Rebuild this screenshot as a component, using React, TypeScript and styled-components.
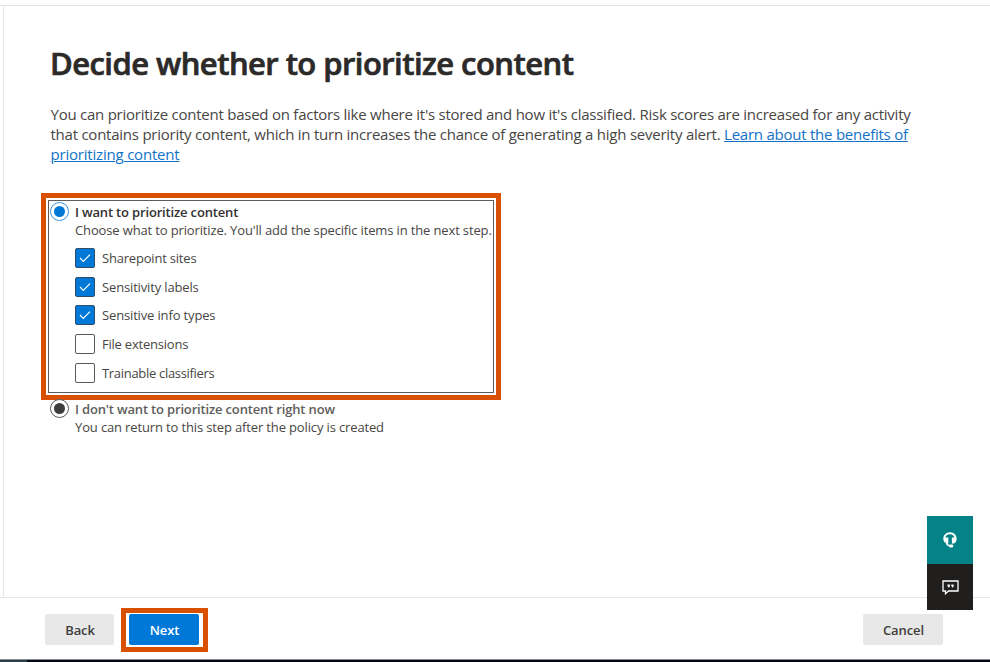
import React from "react";
import styled, { createGlobalStyle } from "styled-components";

const GlobalStyle = createGlobalStyle`
  * { box-sizing: border-box; }
  body {
    margin: 0;
    background: #fff;
    color: #323130;
    font-family: "Open Sans", "Noto Sans", sans-serif;
  }
`;

const Page = styled.div`
  position: relative;
  display: flex;
  flex-direction: column;
  width: 990px;
  height: 662px;
  padding-top: 5px;
  overflow: hidden;
`;

const Main = styled.main`
  flex: 1;
  border-top: 1px solid #e3e3e3;
  padding-left: 3px;
`;

const Panel = styled.section`
  height: 100%;
  border-left: 1px solid #e6e6e6;
  padding: 37px 0 0 37px;
`;

const Title = styled.h1`
  margin: 0 0 0 9px;
  font-size: 31px;
  font-weight: 600;
  line-height: 40px;
  letter-spacing: -0.55px;
  white-space: nowrap;
  color: #2b2a29;
  -webkit-text-stroke: 0.7px #2b2a29;
`;

const Intro = styled.p`
  margin: 21px 0 0 9.500px;
  font-size: 15px;
  line-height: 20px;
  color: #484644;
`;

const IntroLine = styled.span<{ $spacing: number }>`
  display: block;
  white-space: nowrap;
  letter-spacing: ${(p) => p.$spacing}px;
`;

const Link = styled.a`
  color: #1272c7;
  text-decoration: underline;
  text-decoration-thickness: 1px;
  text-underline-offset: 1px;
`;

const Highlight = styled.div`
  border: 5px solid #d85000;
`;

const OptionHighlight = styled(Highlight)`
  width: 460px;
  height: 207px;
  margin-top: 29px;
  padding: 2px;
`;

const FocusFrame = styled.div`
  height: 193px;
  padding-top: 1px;
  border: 1px solid #5c5c5c;
`;

const Option = styled.div<{ $outside?: boolean }>`
  display: flex;
  gap: 6px;
  margin-top: ${(p) => (p.$outside ? "-1px" : "0")};
  padding-left: ${(p) => (p.$outside ? "9px" : "1px")};
`;

const Radio = styled.span<{ $color: string; $ring: string }>`
  display: grid;
  place-items: center;
  flex: none;
  width: 19px;
  height: 19px;
  border: 1px solid ${(p) => p.$ring};
  border-radius: 50%;
  background: #fff;

  &::after {
    content: "";
    width: 11px;
    height: 11px;
    border-radius: 50%;
    background: ${(p) => p.$color};
  }
`;

const OptionText = styled.div`
  padding-top: 1px;
  font-size: 13px;
  line-height: 18px;
  white-space: nowrap;
`;

const OptionTitle = styled.div<{ $muted?: boolean }>`
  font-weight: 600;
  letter-spacing: -0.165px;
  color: ${(p) => (p.$muted ? "#605e5c" : "#323130")};
`;

const OptionNote = styled.div`
  letter-spacing: -0.14px;
  color: #484644;
`;

const CheckList = styled.div`
  display: grid;
  gap: 8.700px;
  margin-top: 9px;
`;

const CheckRow = styled.div<{ $spacing: number }>`
  display: flex;
  align-items: center;
  gap: 7px;
  height: 20px;
  color: #484644;
  line-height: 20px;
  letter-spacing: ${(p) => p.$spacing}px;
`;

const Box = styled.span<{ $checked: boolean }>`
  display: grid;
  place-items: center;
  width: 20px;
  height: 20px;
  border: 1px solid ${(p) => (p.$checked ? "#2d4d6b" : "#5c5a58")};
  border-radius: 2px;
  background: ${(p) => (p.$checked ? "#0078d7" : "#fff")};
`;

const Footer = styled.footer`
  display: flex;
  align-items: center;
  height: 62px;
  padding: 2px 47px 0 45px;
  border-top: 1px solid #e6e6e6;
`;

const Button = styled.button<{ $primary?: boolean; $wide?: boolean }>`
  width: ${(p) => (p.$wide ? 80 : p.$primary ? 70 : 69)}px;
  height: 31px;
  padding: 1px 0 0 1px;
  border: 0;
  border-radius: 2px;
  background: ${(p) => (p.$primary ? "#0078d7" : "#e8e8e8")};
  color: ${(p) => (p.$primary ? "#fff" : "#3f3e3c")};
  font: 600 13px/28px "Open Sans", "Noto Sans", sans-serif;
  letter-spacing: -0.1px;
`;

const NextHighlight = styled(Highlight)`
  display: flex;
  align-items: center;
  width: 87px;
  height: 44px;
  margin: 0 auto 0 7px;
  padding-left: 3px;
`;

const Taskbar = styled.div`
  height: 3px;
  border-top: 1px solid #8a8d92;
  background: linear-gradient(90deg, #26404b 27px, #020715 27px);
`;

const HelpDock = styled.aside`
  position: absolute;
  top: 516px;
  right: 17px;
  width: 46px;
`;

const DockButton = styled.div<{ $tone: string; $height: number }>`
  display: grid;
  place-items: center;
  height: ${(p) => p.$height}px;
  background: ${(p) => p.$tone};
  color: #fff;
`;

const CheckMark = () => (
  <svg width="12" height="10" viewBox="0 0 12 10" fill="none">
    <path d="M1 5l3.3 3.3L11 1.6" stroke="#fff" strokeWidth="1.2" />
  </svg>
);

const HeadsetIcon = () => (
  <svg width="14" height="16" viewBox="0 0 14 16" fill="none">
    <path
      d="M2.600 10C.7 7.800.9 4.500 2.700 2.900c2.200-2.200 6.400-2.200 8.500.1 1.800 2.100 1.700 5 .1 7.200"
      stroke="currentColor"
      strokeWidth="2"
    />
    <path d="M1.500 5.500h3.800v5.900H3.600L1.500 9.600zM8.900 5.500h3.800v4.300l-1.600 1.600H8.900z" fill="currentColor" />
    <path d="M3.500 10.900c.5 1.900 1.700 2.800 3.600 3" stroke="currentColor" strokeWidth="1.700" />
    <rect x="6.200" y="12.500" width="4" height="2.900" rx="1.200" fill="currentColor" />
  </svg>
);

const FeedbackIcon = () => (
  <svg width="17" height="15" viewBox="0 0 17 15" fill="none">
    <path d="M1 1h15v10H6.500L3.500 13.700V11H1z" stroke="currentColor" strokeWidth="1.300" />
    <path
      d="M5.500 4.500h2.400v2l-1 1h-.6v-1h-.8zM9.300 4.500h2.400v2l-1 1h-.6v-1h-.8z"
      fill="currentColor"
    />
  </svg>
);

const items = [
  { label: "Sharepoint sites", checked: true, spacing: -0.2 },
  { label: "Sensitivity labels", checked: true, spacing: -0.15 },
  { label: "Sensitive info types", checked: true, spacing: -0.15 },
  { label: "File extensions", checked: false, spacing: -0.22 },
  { label: "Trainable classifiers", checked: false, spacing: -0.31 },
];

export default function App() {
  return (
    <Page>
      <GlobalStyle />
      <Main>
        <Panel>
          <Title>Decide whether to prioritize content</Title>
          <Intro>
            <IntroLine $spacing={-0.242}>
              You can prioritize content based on factors like where it's stored and how it's
              classified. Risk scores are increased for any activity
            </IntroLine>
            <IntroLine $spacing={-0.24}>
              that contains priority content, which in turn increases the chance of generating a
              high severity alert. <Link>Learn about the benefits of</Link>
            </IntroLine>
            <IntroLine $spacing={-0.2}>
              <Link>prioritizing content</Link>
            </IntroLine>
          </Intro>
          <OptionHighlight>
            <FocusFrame>
              <Option>
                <Radio $color="#0078d7" $ring="#3b93dc" />
                <OptionText>
                  <OptionTitle>I want to prioritize content</OptionTitle>
                  <OptionNote>
                    Choose what to prioritize. You'll add the specific items in the next step.
                  </OptionNote>
                  <CheckList>
                    {items.map((item) => (
                      <CheckRow key={item.label} $spacing={item.spacing}>
                        <Box $checked={item.checked}>{item.checked && <CheckMark />}</Box>
                        {item.label}
                      </CheckRow>
                    ))}
                  </CheckList>
                </OptionText>
              </Option>
            </FocusFrame>
          </OptionHighlight>
          <Option $outside>
            <Radio $color="#3f3e3c" $ring="#5c5a58" />
            <OptionText>
              <OptionTitle $muted>I don't want to prioritize content right now</OptionTitle>
              <OptionNote>You can return to this step after the policy is created</OptionNote>
            </OptionText>
          </Option>
        </Panel>
      </Main>
      <Footer>
        <Button>Back</Button>
        <NextHighlight>
          <Button $primary>Next</Button>
        </NextHighlight>
        <Button $wide>Cancel</Button>
      </Footer>
      <Taskbar />
      <HelpDock>
        <DockButton $tone="#038387" $height={48}>
          <HeadsetIcon />
        </DockButton>
        <DockButton $tone="#201f1e" $height={46}>
          <FeedbackIcon />
        </DockButton>
      </HelpDock>
    </Page>
  );
}
